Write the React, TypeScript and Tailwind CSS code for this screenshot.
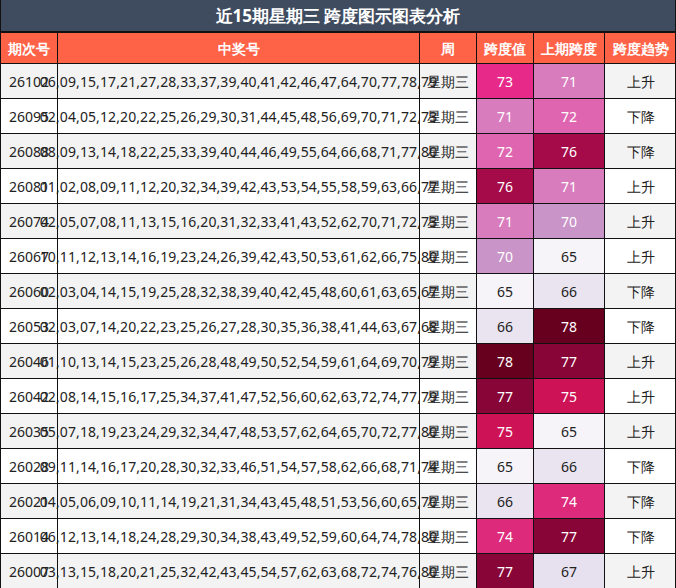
const rows: [string, string, number, number, string][] = [
  ["26102", "06,09,15,17,21,27,28,33,37,39,40,41,42,46,47,64,70,77,78,79", 73, 71, "上升"],
  ["26095", "02,04,05,12,20,22,25,26,29,30,31,44,45,48,56,69,70,71,72,73", 71, 72, "下降"],
  ["26088", "08,09,13,14,18,22,25,33,39,40,44,46,49,55,64,66,68,71,77,80", 72, 76, "下降"],
  ["26081", "01,02,08,09,11,12,20,32,34,39,42,43,53,54,55,58,59,63,66,77", 76, 71, "上升"],
  ["26074", "02,05,07,08,11,13,15,16,20,31,32,33,41,43,52,62,70,71,72,73", 71, 70, "上升"],
  ["26067", "10,11,12,13,14,16,19,23,24,26,39,42,43,50,53,61,62,66,75,80", 70, 65, "上升"],
  ["26060", "02,03,04,14,15,19,25,28,32,38,39,40,42,45,48,60,61,63,65,67", 65, 66, "下降"],
  ["26053", "02,03,07,14,20,22,23,25,26,27,28,30,35,36,38,41,44,63,67,68", 66, 78, "下降"],
  ["26046", "01,10,13,14,15,23,25,26,28,48,49,50,52,54,59,61,64,69,70,79", 78, 77, "上升"],
  ["26042", "02,08,14,15,16,17,25,34,37,41,47,52,56,60,62,63,72,74,77,79", 77, 75, "上升"],
  ["26035", "05,07,18,19,23,24,29,32,34,47,48,53,57,62,64,65,70,72,77,80", 75, 65, "上升"],
  ["26028", "09,11,14,16,17,20,28,30,32,33,46,51,54,57,58,62,66,68,71,74", 65, 66, "下降"],
  ["26021", "04,05,06,09,10,11,14,19,21,31,34,43,45,48,51,53,56,60,65,70", 66, 74, "下降"],
  ["26014", "06,12,13,14,18,24,28,29,30,34,38,43,49,52,59,60,64,74,78,80", 74, 77, "下降"],
  ["26007", "03,13,15,18,20,21,25,32,42,43,45,54,57,62,63,68,72,74,76,80", 77, 67, "上升"],
];

const heat: Record<number, string> = {
  65: "bg-[#f7f4f9] text-[#222]",
  66: "bg-[#e9e4f0] text-[#222]",
  67: "bg-[#e7e1ef] text-[#222]",
  70: "bg-[#c994c7] text-white",
  71: "bg-[#d87cbd] text-white",
  72: "bg-[#df65b0] text-white",
  73: "bg-[#e7298a] text-white",
  74: "bg-[#de2a7b] text-white",
  75: "bg-[#ce1256] text-white",
  76: "bg-[#a50b48] text-white",
  77: "bg-[#870537] text-white",
  78: "bg-[#67001f] text-white",
};

const cols = "grid grid-cols-[57px_362px_57px_57px_71px_72px]";
const serif = "font-['Liberation_Serif','Noto_Sans_CJK_SC',serif]";
const cell = "flex items-center justify-center border-r border-[#111] text-[14px]";

export default function App() {
  return (
    <div className="w-[676px] h-[588px] bg-white border-x border-[#111] text-[#222] font-['Noto_Sans_CJK_SC',sans-serif]">
      <div className="h-[33px] bg-[#3f4c5f] text-white text-[17px] font-bold flex items-center justify-center border-b-2 border-[#111]">
        <span>近<span className={serif}>15</span>期星期三 跨度图示图表分析</span>
      </div>
      <div className={`${cols} h-[30px] bg-[#ff6347] text-white text-[14px] font-bold`}>
        {["期次号", "中奖号", "周", "跨度值", "上期跨度", "跨度趋势"].map((h) => (
          <div key={h} className="flex items-center justify-center border-r border-[#111] last:border-r-0">{h}</div>
        ))}
      </div>
      {rows.map(([id, nums, span, prev, trend], i) => (
        <div key={id} className={`${cols} h-[35px] border-t border-[#111] ${i % 2 === 0 ? "bg-[#f3f3f3]" : "bg-white"}`}>
          <div className={`${cell} ${serif}`}>{id}</div>
          <div className={`${cell} ${serif} tracking-[0.1px]`}>{nums}</div>
          <div className={cell}>星期三</div>
          <div className={`${cell} ${serif} ${heat[span]}`}>{span}</div>
          <div className={`${cell} ${serif} ${heat[prev]}`}>{prev}</div>
          <div className="flex items-center justify-center text-[14px]">{trend}</div>
        </div>
      ))}
    </div>
  );
}
